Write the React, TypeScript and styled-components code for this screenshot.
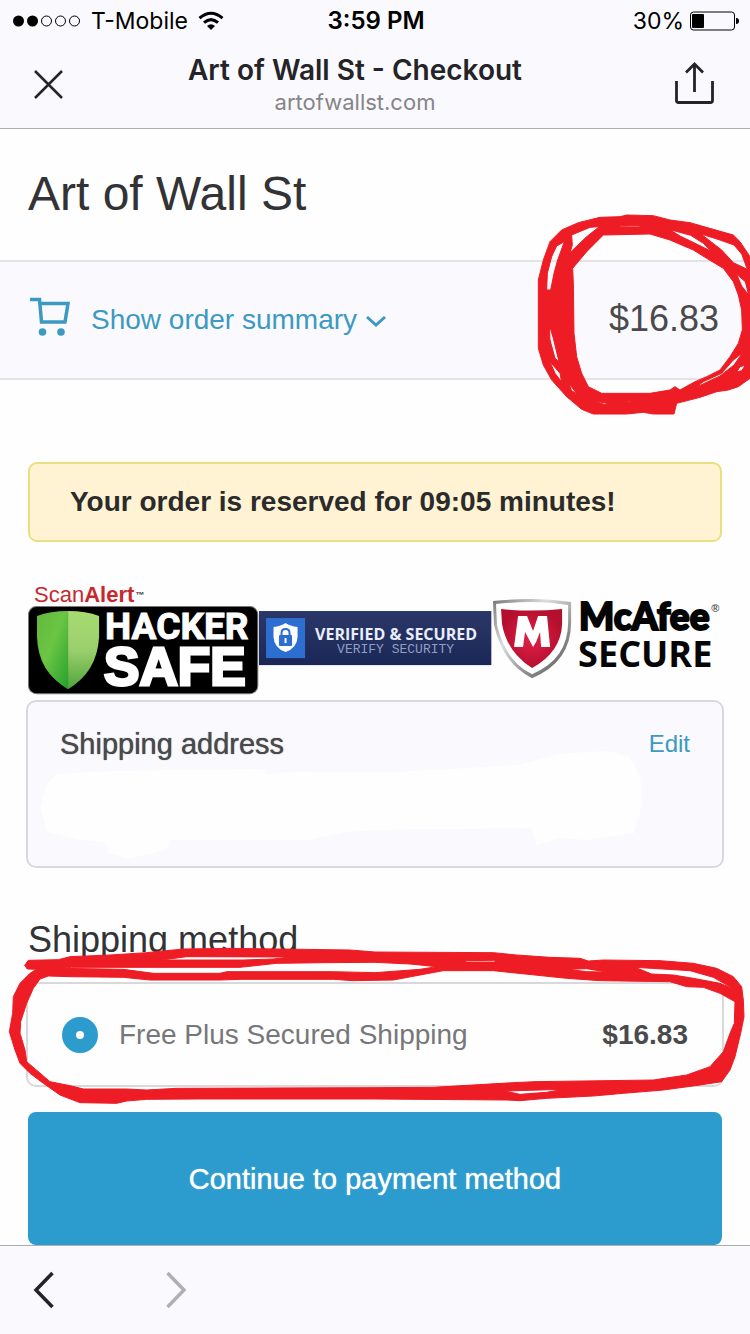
import React from "react";
import styled, { createGlobalStyle } from "styled-components";

const blue = "#2c9ccf";
const ink = "#4a4a4d";
const red = "#ee1c24";
const system = `Inter, "Liberation Sans", sans-serif`;
const body = `"Liberation Sans", Arial, sans-serif`;

const GlobalStyle = createGlobalStyle`
  * { box-sizing: border-box; }
  body { margin: 0; background: #fefefe; font-family: ${body}; color: ${ink}; }
  h1, h2, p { margin: 0; font-weight: 400; }
  button { border: 0; padding: 0; background: none; font: inherit; color: inherit; cursor: pointer; }
  svg { display: block; }
`;

const Page = styled.div`
  display: flex;
  flex-direction: column;
  min-height: 100vh;
  overflow-x: hidden;
`;

const BrowserTop = styled.header`
  background: #faf9fd;
  border-bottom: 1px solid #adadb0;
  font-family: ${system};
`;

const StatusBar = styled.div`
  display: grid;
  grid-template-columns: 1fr auto 1fr;
  align-items: center;
  height: 40px;
  padding: 1px 11px 0 13px;
  font-size: 23px;
  color: #000;
`;

const StatusGroup = styled.div<{ $end?: boolean }>`
  display: flex;
  align-items: center;
  justify-content: ${(p) => (p.$end ? "flex-end" : "flex-start")};
  gap: ${(p) => (p.$end ? 6 : 10)}px;
`;

const Clock = styled.time`
  font-size: 24px;
  font-weight: 600;
`;

const NavBar = styled.div`
  display: flex;
  align-items: center;
  height: 88px;
  padding: 0 36px 0 34px;
  color: #242428;
`;

const PageTitle = styled.div`
  flex: 1;
  padding: 2px 28px 0 0;
  text-align: center;
`;

const TitleText = styled.p`
  font-size: 28px;
  line-height: 34px;
  font-weight: 600;
`;

const Host = styled.p`
  font-size: 22px;
  line-height: 30px;
  color: #858588;
`;

const Main = styled.main`
  flex: 1;
`;

const Brand = styled.h1`
  padding: 37px 28px 38px;
  font-size: 48px;
  line-height: 56px;
  color: #333336;
`;

const OrderSummary = styled.section`
  position: relative;
  display: flex;
  align-items: center;
  justify-content: space-between;
  min-height: 120px;
  padding: 0 31px 2px 30px;
  background: #faf9fd;
  border: solid #e4e3e7;
  border-width: 2px 0;
`;

const SummaryToggle = styled.button`
  display: flex;
  align-items: center;
  font-size: 28px;
  line-height: 36px;
  color: #3c9ac2;
`;

const ToggleLabel = styled.span`
  padding: 4px 9px 2px 21px;
`;

const Total = styled.strong`
  font-size: 36px;
  font-weight: 400;
`;

const Scribble = styled.svg<{ $wide?: boolean }>`
  position: absolute;
  right: 0;
  top: ${(p) => (p.$wide ? -14 : -62)}px;
  width: ${(p) => (p.$wide ? "100%" : "230px")};
  height: ${(p) => (p.$wide ? 220 : 230)}px;
  fill: ${red};
  fill-rule: evenodd;
  stroke: ${red};
  stroke-width: 3;
  stroke-linejoin: round;
  pointer-events: none;
`;

const Content = styled.div`
  padding: 82px 28px 0;
`;

const Notice = styled.p`
  padding: 22px 40px;
  border: 2px solid #e8e07e;
  border-radius: 9px;
  background: #fff3d4;
  font-size: 28px;
  line-height: 32px;
  font-weight: 700;
  color: #2b2b2b;
`;

const Badges = styled.div`
  display: grid;
  grid-template-columns: repeat(3, 1fr);
  margin-top: 40px;
`;

const Badge = styled.svg`
  width: 100%;
  height: auto;
  overflow: visible;
`;

const AddressPanel = styled.section`
  position: relative;
  min-height: 168px;
  margin: 6px -2px 0;
  padding: 24px 32px;
  background: #faf9fd;
  border: 2px solid #d9d8dc;
  border-radius: 10px;
`;

const Redaction = styled.svg`
  position: absolute;
  left: -8px;
  top: -12px;
  width: calc(100% + 16px);
  height: 190px;
  fill: #fefefe;
`;

const PanelHead = styled.div`
  position: relative;
  display: flex;
  align-items: center;
  justify-content: space-between;
`;

const PanelTitle = styled.h2`
  font-size: 29px;
  line-height: 36px;
  text-shadow: 0 0 1px currentColor;
`;

const EditLink = styled.a`
  font-size: 24px;
  color: #3c9ac2;
  text-decoration: none;
`;

const MethodArea = styled.section`
  position: relative;
  margin: 46px -28px 0;
  padding: 0 26px;
`;

const MethodTitle = styled.h2`
  padding: 6px 2px 22px;
  font-size: 36px;
  line-height: 40px;
  color: #333336;
`;

const MethodOption = styled.label`
  display: flex;
  align-items: center;
  min-height: 105px;
  padding: 0 34px;
  border: 2px solid #d9d8dc;
  border-radius: 10px;
  font-size: 28px;
  color: #77777a;
`;

const Radio = styled.input`
  appearance: none;
  width: 36px;
  height: 36px;
  margin: 0 21px 0 0;
  border: 14px solid ${blue};
  border-radius: 50%;
  background: #fff;
`;

const MethodPrice = styled.strong`
  margin-left: auto;
  color: ${ink};
`;

const ContinueButton = styled.button`
  && {
    display: block;
    width: 100%;
    min-height: 133px;
    margin-top: 25px;
    padding-top: 2px;
    border-radius: 8px;
    background: ${blue};
    color: #fff;
    font-size: 29px;
    text-shadow: 0 0 1px currentColor;
  }
`;

const BrowserBottom = styled.nav`
  display: flex;
  align-items: center;
  gap: 110px;
  height: 89px;
  padding-left: 33px;
  background: #faf9fd;
  border-top: 1px solid #adadb0;
`;

const HistoryButton = styled.button`
  && {
    color: #242428;
  }
  &&:disabled {
    color: #b0afb3;
  }
`;

function SignalDots() {
  return (
    <svg width="68" height="14" viewBox="0 0 68 14" aria-hidden="true">
      <circle cx="5.500" cy="7" r="5.500" />
      <circle cx="19.500" cy="7" r="5.500" />
      <g fill="none" stroke="#000" strokeWidth="1">
        <circle cx="33.500" cy="7" r="5" />
        <circle cx="47.500" cy="7" r="5" />
        <circle cx="61.500" cy="7" r="5" />
      </g>
    </svg>
  );
}

function WifiIcon() {
  return (
    <svg width="26" height="20" viewBox="0 0 26 20" aria-hidden="true">
      <g fill="none" stroke="#000" strokeWidth="3">
        <path d="M1.500 7.200 Q13 -2.800 24.500 7.200" />
        <path d="M6 11.700 Q13 5.500 20 11.700" />
      </g>
      <path d="M9 15 Q13 11.500 17 15 L13 19Z" />
    </svg>
  );
}

function BatteryIcon() {
  return (
    <svg width="49" height="20" viewBox="0 0 49 20" aria-hidden="true">
      <rect x=".5" y="1" width="44" height="18" rx="3" fill="none" stroke="#000" />
      <rect x="2" y="3" width="12" height="14" rx="1" />
      <path d="M46 7 Q49 7 49 10 Q49 13 46 13Z" />
    </svg>
  );
}

function HackerSafeBadge() {
  return (
    <Badge viewBox="0 0 231 112" role="img" aria-label="ScanAlert Hacker Safe">
      <defs>
        <linearGradient id="leafDark" x1="0" y1="0" x2="1" y2="1">
          <stop offset="0" stopColor="#62b83c" />
          <stop offset=".45" stopColor="#6cc544" />
          <stop offset="1" stopColor="#25a12c" />
        </linearGradient>
        <linearGradient id="leafLight" x1="0" y1="0" x2="0" y2="1">
          <stop offset="0" stopColor="#a6dc72" />
          <stop offset=".5" stopColor="#9bcf6d" />
          <stop offset="1" stopColor="#4fa53a" />
        </linearGradient>
      </defs>
      <text x="6" y="20" fontFamily="Liberation Sans, sans-serif" fontSize="22" fill="#c8282c">
        Scan<tspan fontWeight="700">Alert</tspan>
      </text>
      <text x="107" y="16" fontFamily="Liberation Sans, sans-serif" fontSize="9" fontWeight="700" fill="#333">™</text>
      <rect x=".5" y="24.500" width="229" height="87" rx="8" fill="#000" stroke="#777" />
      <path d="M40 29 Q22 29 9 34 V55 Q10 90 40 107Z" fill="url(#leafDark)" />
      <path d="M40 29 Q58 29 71 34 V55 Q69 90 40 107Z" fill="url(#leafLight)" />
      <text x="77" y="57" fontFamily="Roboto, sans-serif" fontSize="37" fontWeight="700" fill="#fff" stroke="#fff">HACKER</text>
      <text x="76" y="103" fontFamily="Liberation Sans, sans-serif" fontSize="53" fontWeight="700" fill="#fff" stroke="#fff" strokeWidth="3">SAFE</text>
    </Badge>
  );
}

function VerifiedBadge() {
  return (
    <Badge viewBox="0 0 231 112" role="img" aria-label="Verified and Secured">
      <defs>
        <linearGradient id="navy" x1="0" y1="0" x2="0" y2="1">
          <stop offset="0" stopColor="#2b3768" />
          <stop offset="1" stopColor="#1b2857" />
        </linearGradient>
      </defs>
      <rect y="29" width="232" height="54" fill="url(#navy)" />
      <rect x="7" y="36" width="39" height="40" fill="#2d6fd0" />
      <path d="M26.500 41 Q31 44 38.500 45 V55 Q38 66 26.500 70 Q15 66 14.500 55 V45 Q22 44 26.500 41Z" fill="#fff" />
      <rect x="20" y="53" width="13" height="11" rx="1" fill="#2d6fd0" />
      <path d="M22.500 54 V51 Q22.500 47 26.500 47 Q30.500 47 30.500 51 V54" fill="none" stroke="#2d6fd0" strokeWidth="2" />
      <path d="M26.500 56 V61" stroke="#fff" strokeWidth="2" />
      <text x="56" y="58" fontFamily="Open Sans, sans-serif" fontSize="16" fontWeight="700" fill="#e9eefb">VERIFIED &amp; SECURED</text>
      <text x="78" y="71" fontFamily="Liberation Mono, monospace" fontSize="13" fill="#8f9fc4">VERIFY SECURITY</text>
    </Badge>
  );
}

function McAfeeBadge() {
  return (
    <Badge viewBox="0 0 231 112" role="img" aria-label="McAfee Secure">
      <defs>
        <linearGradient id="steel" x1="0" y1="0" x2="1" y2="1">
          <stop offset="0" stopColor="#777" />
          <stop offset=".35" stopColor="#ddd" />
          <stop offset=".7" stopColor="#888" />
          <stop offset="1" stopColor="#555" />
        </linearGradient>
        <radialGradient id="crimson">
          <stop offset="0" stopColor="#e32049" />
          <stop offset="1" stopColor="#b50f2e" />
        </radialGradient>
      </defs>
      <path d="M2 19 Q22 17 41 17 Q60 17 80 20 V40 Q80 80 41 96 Q12 82 3 43Z" fill="url(#steel)" />
      <path d="M5 22 Q22 20 41 20 Q59 20 77 23 V40 Q77 77 41 92 Q15 80 6 43Z" fill="#fff" />
      <path d="M10 27 Q40 30 71 27 V42 Q70 70 41 86 Q16 70 11 42Z" fill="url(#crimson)" />
      <path d="M27 34 H36 L42 49 L47 34 H56 L59 65 H50 L49 50 L45 60 L42 65 L34 50 L32 65 H23Z" fill="#fff" />
      <g fill="#050505" stroke="#050505">
        <text x="88" y="48" fontFamily="Lato, sans-serif" fontSize="37" fontWeight="900" strokeWidth="2">McAfee</text>
        <text x="87" y="85" fontFamily="Open Sans, sans-serif" fontSize="36" fontWeight="700" strokeWidth="0">SECURE</text>
      </g>
      <text x="220" y="30" fontFamily="Liberation Sans, sans-serif" fontSize="11" fontWeight="700" fill="#555">®</text>
    </Badge>
  );
}

export default function App() {
  return (
    <Page>
      <GlobalStyle />
      <BrowserTop>
        <StatusBar>
          <StatusGroup>
            <SignalDots />
            <span>T-Mobile</span>
            <WifiIcon />
          </StatusGroup>
          <Clock>3:59 PM</Clock>
          <StatusGroup $end>
            <span>30%</span>
            <BatteryIcon />
          </StatusGroup>
        </StatusBar>
        <NavBar>
          <button aria-label="Close">
            <svg width="29" height="29" viewBox="0 0 29 29" stroke="currentColor" strokeWidth="2.500">
              <path d="M1 1 L28 28 M28 1 L1 28" />
            </svg>
          </button>
          <PageTitle>
            <TitleText>Art of Wall St - Checkout</TitleText>
            <Host>artofwallst.com</Host>
          </PageTitle>
          <button aria-label="Share">
            <svg width="39" height="44" viewBox="0 0 39 44" fill="none" stroke="currentColor" strokeWidth="2.800">
              <path d="M1.500 19 V38.500 Q1.500 40.500 3.500 40.500 H35.500 Q37.500 40.500 37.500 38.500 V19" />
              <path d="M19.500 30 V2 M11 10.500 L19.500 2 L28 10.500" />
            </svg>
          </button>
        </NavBar>
      </BrowserTop>

      <Main>
        <Brand>Art of Wall St</Brand>
        <OrderSummary>
          <SummaryToggle aria-expanded="false">
            <svg width="40" height="48" viewBox="0 0 40 48" fill="none" stroke="currentColor" strokeWidth="3.500">
              <path d="M0 4.500 H9.500 L11.500 27 H35 L38 8.500 H10" />
              <circle cx="12.500" cy="37" r="3.800" fill="currentColor" stroke="none" />
              <circle cx="31" cy="37" r="3.800" fill="currentColor" stroke="none" />
            </svg>
            <ToggleLabel>Show order summary</ToggleLabel>
            <svg width="20" height="16" viewBox="0 0 20 16" fill="none" stroke="currentColor" strokeWidth="3">
              <path d="M1 6 L10 14 L19 6" />
            </svg>
          </SummaryToggle>
          <Total>$16.83</Total>
          <Scribble viewBox="0 0 690 690" aria-hidden="true">
            <path
              d="M55 240 L70 180 L90 125 L125 90 L175 68 L240 52 L300 50 L320 45 L400 47 L450 60 L510 68 L580 88 L640 105 L660 125 L690 170 V535 L655 560 L625 570 L590 575 L540 592 L470 610 L462 642 L400 642 L370 637 L320 642 L220 642 L185 628 L140 590 L95 540 L70 495 L55 445Z
              M158 205 L200 155 L250 105 L390 102 L450 120 L520 150 L560 175 L610 205 L640 245 L655 285 L665 330 L667 390 L655 430 L630 470 L600 510 L560 530 L525 545 L480 570 L465 560 L450 570 L390 580 L245 580 L205 560 L185 520 L170 470 L162 400 L160 250Z
              M155 105 L210 82 L238 80 L200 110 L150 158 L157 135Z
              M133 125 L113 180 L102 220 L92 270 L80 270 L82 220 L95 170 L110 138Z
              M88 375 L100 415 L117 485 L105 475 L90 420Z
              M90 485 L120 520 L125 546 L105 520Z
              M146 550 L171 582 L155 572Z
              M300 76 L360 78 L360 81 L300 80Z
              M450 89 L512 106 L550 130 L572 153 L540 137 L480 108Z
              M543 102 L600 120 L642 135 L665 162 L682 208 L640 188 L605 150Z
              M650 223 L676 245 L686 285 L665 258Z
              M668 458 L642 495 L600 528 L528 562 L550 545 L605 520 L640 480Z
              M650 516 L660 500 L676 496 L665 512Z
              M225 603 L265 611 L255 614Z M320 603 L333 604 L328 607Z"
            />
          </Scribble>
        </OrderSummary>

        <Content>
          <Notice>Your order is reserved for 09:05 minutes!</Notice>
          <Badges>
            <HackerSafeBadge />
            <VerifiedBadge />
            <McAfeeBadge />
          </Badges>

          <AddressPanel>
            <Redaction viewBox="0 0 1568 570" preserveAspectRatio="none" aria-hidden="true">
              <path d="M45 350 L60 280 L80 255 L150 245 L320 240 L535 237 L545 255 L600 245 L820 247 L1100 225 L1200 190 L1300 183 L1345 200 L1370 260 L1375 340 L1355 430 L1250 450 L1190 445 L1140 465 L1130 415 L850 418 L720 425 L640 450 L330 450 L325 480 L240 505 L195 490 L190 455 L130 450 L60 425Z" />
            </Redaction>
            <PanelHead>
              <PanelTitle>Shipping address</PanelTitle>
              <EditLink href="#address">Edit</EditLink>
            </PanelHead>
          </AddressPanel>

          <MethodArea>
            <MethodTitle>Shipping method</MethodTitle>
            <MethodOption>
              <Radio type="radio" name="shipping" defaultChecked />
              Free Plus Secured Shipping
              <MethodPrice>$16.83</MethodPrice>
            </MethodOption>
            <Scribble $wide viewBox="0 0 2250 660" preserveAspectRatio="none" aria-hidden="true">
              <path
                d="M74 196 L85 181 L175 179 L210 170 L330 165 L440 158 L550 147 L690 145 L1050 150 L1125 156 L1480 158 L1550 165 L1650 172 L1740 175 L1765 183 L1810 180 L1980 182 L2080 190 L2150 205 L2200 230 L2225 260 L2230 300 L2232 350 L2222 400 L2205 470 L2190 510 L2165 545 L2100 555 L1990 570 L1870 580 L1780 588 L1640 595 L1560 602 L1520 600 L1125 597 L590 597 L440 598 L380 603 L350 610 L240 608 L180 585 L130 550 L90 520 L60 490 L45 450 L28 395 L38 340 L40 290 L60 250 L90 220 L110 208 L82 207Z
                M120 237 L145 228 L210 230 L370 232 L450 240 L660 240 L720 238 L1000 238 L1060 242 L1180 240 L1260 225 L1330 212 L1480 212 L1700 235 L1800 242 L2010 245 L2060 260 L2110 262 L2160 280 L2205 305 L2203 370 L2190 400 L2170 455 L2130 500 L2060 525 L1960 540 L1605 545 L1540 548 L1300 562 L1125 563 L530 565 L440 570 L380 567 L250 567 L215 558 L150 545 L80 485 L75 450 L60 400 L62 365 L80 310 L100 265Z
                M185 205 L215 202 L720 202 L830 190 L980 188 L1125 187 L1230 192 L1310 200 L1260 208 L1125 218 L1000 215 L680 215 L660 220 L460 220 L370 208Z
                M485 180 L560 170 L870 171 L820 177 L730 180Z
                M1395 182 L1480 181 L1490 186 L1400 186Z
                M1705 208 L1760 206 L1820 216 L1760 215Z
                M1905 202 L2070 212 L2140 232 L2200 266 L2160 250 L2080 235 L2020 225 L1955 222Z
                M1515 573 L1690 568 L1640 577 L1560 583Z"
              />
            </Scribble>
          </MethodArea>

          <ContinueButton>Continue to payment method</ContinueButton>
        </Content>
      </Main>

      <BrowserBottom>
        <HistoryButton aria-label="Back">
          <svg width="22" height="38" viewBox="0 0 22 38" fill="none" stroke="currentColor" strokeWidth="3.500">
            <path d="M19.500 2 L3 19 L19.500 36" />
          </svg>
        </HistoryButton>
        <HistoryButton aria-label="Forward" disabled>
          <svg width="22" height="38" viewBox="0 0 22 38" fill="none" stroke="currentColor" strokeWidth="3.500">
            <path d="M2.500 2 L19 19 L2.500 36" />
          </svg>
        </HistoryButton>
      </BrowserBottom>
    </Page>
  );
}
